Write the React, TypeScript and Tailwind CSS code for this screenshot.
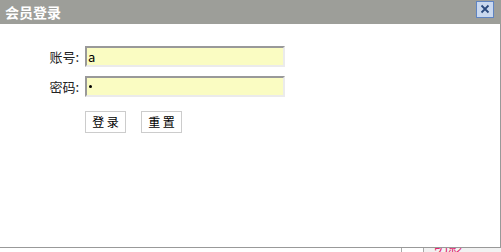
import React from 'react';

const font = { fontFamily: '"Noto Sans CJK SC", "Liberation Sans", sans-serif' };

const Field: React.FC<{ label: string; children: React.ReactNode }> = ({ label, children }) => (
  <div className="flex items-center h-[21px]">
    <span className="w-[85px] pr-[6px] text-right text-[13px] text-[#222]">{label}</span>
    <div className="w-[200px] h-[21px] bg-[#fafcc2] border-2 border-t-[#999] border-l-[#999] border-b-[#ebebeb] border-r-[#ebebeb] flex items-center pl-[1px] text-[13px] text-black leading-none">
      {children}
    </div>
  </div>
);

const App: React.FC = () => {
  return (
    <div className="w-[501px] h-[252px] bg-white overflow-hidden flex flex-col" style={font}>
      <div className="h-[24px] bg-[#9d9e99] flex items-center justify-between pl-[5px] pr-[7px] shrink-0">
        <span className="text-white text-[14px] font-bold leading-none">会员登录</span>
        <button className="w-[18px] h-[17px] -mt-[6px] bg-[#c9d8ef] border border-[#5f84c2] flex items-center justify-center">
          <svg width="10" height="10" viewBox="0 0 10 10">
            <path d="M1.5 1.5 L8.5 8.5 M8.5 1.5 L1.5 8.5" stroke="#2b4a7e" strokeWidth="1.8" />
          </svg>
        </button>
      </div>
      <div className="h-[224px] border-r border-b border-[#999] shrink-0 pt-[22px]">
        <div className="flex flex-col gap-[9px]">
          <Field label="账号:">a</Field>
          <Field label="密码:">
            <span className="w-[3px] h-[3px] ml-[1px] rounded-full bg-black" />
          </Field>
        </div>
        <div className="flex gap-[15px] ml-[85px] mt-[14px]">
          <button className="w-[41px] h-[22px] border border-[#ccc] bg-white text-[12px] text-black">登 录</button>
          <button className="w-[41px] h-[22px] border border-[#ccc] bg-white text-[12px] text-black">重 置</button>
        </div>
      </div>
      <div className="flex h-[4px] overflow-hidden">
        <div className="w-[401px] bg-white" />
        <div className="w-[1px] bg-[#aaa]" />
        <div className="w-[21px] bg-white" />
        <div className="w-[1px] bg-[#aaa]" />
        <div className="flex-1 bg-[#f2f2f2] pl-[10px] leading-none">
          <span className="text-[#e0286e] text-[14px] block -mt-[10px]">明影</span>
        </div>
      </div>
    </div>
  );
};

export default App;
